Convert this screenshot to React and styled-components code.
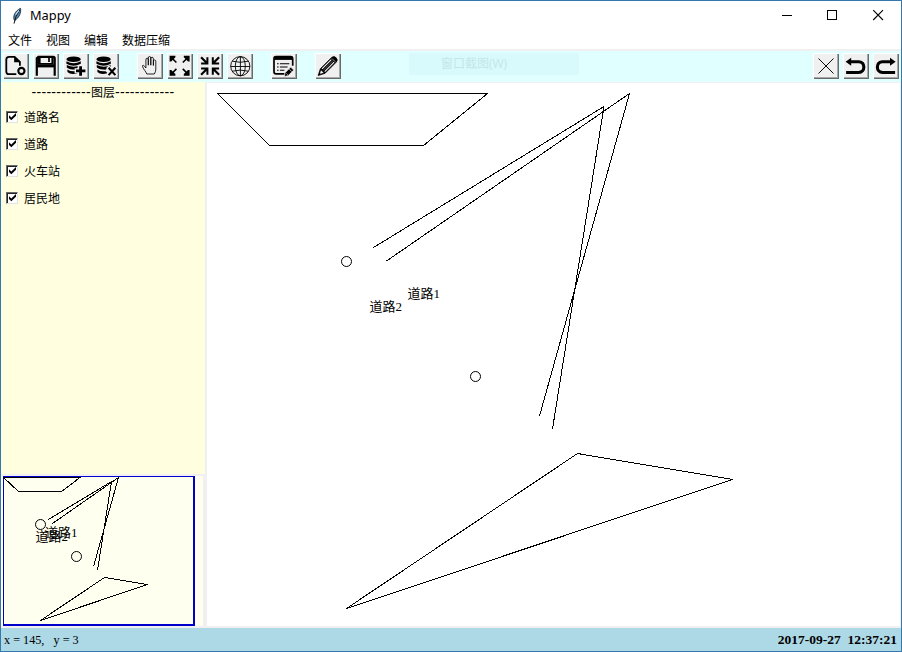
import React from 'react';
import styled, { createGlobalStyle } from 'styled-components';

const GlobalStyle = createGlobalStyle`
  * { box-sizing: border-box; }
  body { margin: 0; background: #fff; }
  svg { display: block; }
`;

const Window = styled.div`
  width: 902px;
  height: 652px;
  border: 1px solid #3578b0;
  background: #f0f0f0;
  display: flex;
  flex-direction: column;
  overflow: hidden;
  color: #000;
  font-family: "Noto Sans", "Noto Sans CJK SC", sans-serif;
`;

const TitleBar = styled.header`
  height: 29px;
  flex: none;
  background: #fff;
  display: flex;
  justify-content: space-between;
`;

const Title = styled.div`
  display: flex;
  align-items: center;
  gap: 6px;
  padding-left: 8px;
  font-size: 12.8px;
  line-height: 29px;
`;

const WindowControls = styled.div`
  display: flex;
`;

const WindowControl = styled.div`
  width: ${(p) => p.$width || 46}px;
`;

const MenuBar = styled.nav`
  height: 19px;
  flex: none;
  background: #fff;
  display: flex;
  gap: 14px;
  padding-left: 7px;
  font-family: "Noto Sans CJK SC", sans-serif;
  font-size: 12px;
  line-height: 20px;
`;

const MenuItem = styled.span`
  white-space: nowrap;
`;

const Toolbar = styled.div`
  height: 33px;
  flex: none;
  background: #e0ffff;
  border-top: 2px solid #f0f0f0;
  display: flex;
  justify-content: space-between;
  padding: 2px 2px 0;
  position: relative;
`;

const ToolGroups = styled.div`
  display: flex;
  gap: 18px;
`;

const ToolGroup = styled.div`
  display: flex;
  gap: 4px;
`;

const ToolButton = styled.button`
  width: 26px;
  height: 26px;
  padding: 0;
  border: none;
  background: #f0f0f0;
  box-shadow: inset 1px 1px #fff, inset -1px -1px #696969, inset -2px -2px #a8a8a8;
`;

const GhostItem = styled.div`
  position: absolute;
  left: 408px;
  top: 2px;
  width: 170px;
  height: 22px;
  padding-left: 32px;
  background: #d8fafc;
  color: #c4e6e8;
  font: 12px/22px "Open Sans", "Noto Sans CJK SC", sans-serif;
`;

const Body = styled.main`
  height: 546px;
  flex: none;
  display: flex;
`;

const Sidebar = styled.aside`
  width: 204px;
  display: flex;
  flex-direction: column;
  gap: 2px;
`;

const Layers = styled.section`
  height: 392px;
  background: #ffffe0;
  font-family: "Noto Sans CJK SC", sans-serif;
  font-size: 12px;
`;

const LayersHeading = styled.div`
  height: 21px;
  display: flex;
  justify-content: center;
  align-items: flex-start;
  line-height: 20px;
`;

const Dashes = styled.span`
  font-family: "Liberation Sans", sans-serif;
  font-size: 14px;
  letter-spacing: 0.29px;
`;

const LayerRow = styled.label`
  height: 27px;
  display: flex;
  align-items: center;
  gap: 6px;
  padding-left: 5px;
`;

const CheckMark = styled.span`
  width: 12px;
  height: 12px;
  background: #fff;
  border: 1px solid;
  border-color: #696969 #e3e3e3 #e3e3e3 #696969;
  box-shadow: inset 1px 1px #222;
`;

const Overview = styled.section`
  width: 202px;
  height: 150px;
  background: #fffff0;
  padding-left: 2px;
`;

const OverviewFrame = styled.div`
  width: 192px;
  height: 150px;
  border: 2px solid #0000cd;
  border-width: 1px 2px 2px 1px;
`;

const MapPane = styled.section`
  width: 693px;
  height: 543px;
  margin: 1px 0 0 2px;
  background: #fff;
`;

const StatusBar = styled.footer`
  height: 23px;
  flex: none;
  background: #add8e6;
  display: flex;
  justify-content: space-between;
  align-items: center;
  padding: 0 4px 0 3px;
  font-family: "Liberation Serif", serif;
  font-size: 12.2px;
  line-height: 24px;
  white-space: pre;
`;

const Clock = styled.time`
  font-size: 13.5px;
  font-weight: bold;
`;

const MapText = styled.text`
  font-family: "Liberation Serif", "Noto Sans CJK SC", serif;
  font-size: 13px;
  fill: #000;
`;

const Database = () => (
  <g>
    <ellipse cx="11" cy="6.5" rx="7.2" ry="2.8" />
    <path d="M3.8 8.5Q11 12.5 18.2 8.5V11Q11 15 3.8 11ZM4.2 12.3Q11 15.5 18 12.4V14Q14 15 13 17Q7 17 4.2 14.8ZM4.8 16.7Q8 19 13 18.5L15 20.5Q8 22.5 4.8 19.2Z" />
  </g>
);

const icons = {
  newFile: (
    <>
      <path d="M13.7 21.5H6.5Q3.7 21.5 3.7 18.7V6.8Q3.7 4.2 6.5 4.2H12L17.3 9.3V13" fill="none" stroke="#000" strokeWidth="1.8" />
      <path d="M11.5 3.5V9.5H17.5" />
      <circle cx="18.8" cy="18.3" r="3.1" fill="none" stroke="#000" strokeWidth="2.1" />
    </>
  ),
  save: (
    <>
      <path d="M4.2 23V5.5L5.8 4.1H20.6Q22.1 4.1 22.1 5.5V23" fill="none" stroke="#000" strokeWidth="2.2" />
      <path d="M6.8 3.5H8V10.2H18.8V3.5H21V12H5V5Z" />
      <path d="M16.4 4.6V9.4" stroke="#000" strokeWidth="1.7" />
      <path d="M4 13.2H22" stroke="#000" strokeWidth="3" />
    </>
  ),
  dbAdd: (
    <>
      <Database />
      <path d="M17.5 12.3V23.5M12 18H23.2" stroke="#f0f0f0" strokeWidth="5" />
      <path d="M18 13.5V23M13.4 18.2H22.8" stroke="#000" strokeWidth="2.8" />
    </>
  ),
  dbRemove: (
    <>
      <Database />
      <path d="M15 14L24 23M24 14L15 23" stroke="#f0f0f0" strokeWidth="4" />
      <path d="M16 15L22.8 22.4M22.8 15L16 22.4" stroke="#000" strokeWidth="2.1" />
    </>
  ),
  hand: (
    <path
      d="M10.2 21.3C9.3 18.6 7.1 17.1 6.1 14.2Q5.4 12.3 6.9 12.7Q8.2 13.6 9.3 15.3V7.2Q9.3 5.4 10.5 5.4Q11.7 5.4 11.7 7.2V12.5V5.3Q11.7 3.8 13 3.8Q14.2 3.8 14.2 5.3V12.5V5.8Q14.2 4.6 15.5 4.6Q16.8 4.6 16.8 6V12.8V8.4Q16.8 7.3 18 7.3Q19.2 7.3 19.2 8.8V16.4Q19.2 19.2 17.7 21.3Z"
      fill="none"
      stroke="#000"
      strokeWidth=".85"
    />
  ),
  expand: (
    <>
      <path d="M4 4L9.8 9.8M22 4L16.2 9.8M4 22L9.8 16.2M22 22L16.2 16.2" stroke="#000" strokeWidth="1.6" />
      <path d="M3 3H8.8V4.6L4.6 8.8H3ZM23 3H17.2V4.6L21.4 8.8H23ZM3 23V17.2H4.6L8.8 21.4V23ZM23 23V17.2H21.4L17.2 21.4V23Z" />
    </>
  ),
  collapse: (
    <>
      <path d="M4.5 4.5L10 10M22.5 4.5L17 10M4.5 22L10 16.5M22.5 22L17 16.5" stroke="#000" strokeWidth="2.2" />
      <path d="M11.8 4.5V11.8H4.5V9.8H8L9.8 8V4.5ZM15.2 4.5V11.8H22.5V9.8H19L17.2 8V4.5ZM11.8 22V14.8H4.5V16.8H8L9.8 18.6V22ZM15.2 22V14.8H22.5V16.8H19L17.2 18.6V22Z" />
    </>
  ),
  globe: (
    <g fill="none" stroke="#000" strokeWidth=".9">
      <circle cx="13.7" cy="13.5" r="9.6" />
      <ellipse cx="13.7" cy="13.5" rx="5" ry="9.6" />
      <path d="M13.8 3.8V23.2M4 13.8H23.3M5.6 8.5Q13.7 10.7 21.8 8.5M5.6 18.5Q13.7 16.3 21.8 18.5" />
    </g>
  ),
  form: (
    <>
      <path d="M14 21.2H5.5Q3.4 21.2 3.4 19V6Q3.4 4 5.5 4H20Q22.1 4 22.1 6.2V13" fill="none" stroke="#000" strokeWidth="1.7" />
      <path d="M3.5 4H22V7.2H3.5Z" />
      <path d="M6.4 11H8M9.3 11H18.8M6.4 14.3H8M9.3 14.3H17M6.4 17.5H8M9.3 17.5H13.8" stroke="#000" strokeWidth="1.1" />
      <path d="M14.5 20L20.1 14.4L23.1 17.4L17.5 23L13.7 23.8Z" stroke="#f0f0f0" strokeWidth=".7" />
      <path d="M18.5 16.2L21.3 19M15.8 20.7L17.2 22.1" stroke="#f0f0f0" strokeWidth=".7" />
    </>
  ),
  pencil: (
    <>
      <path d="M3.6 22.8L5.8 16L17 4.8Q19.2 2.8 21.5 5Q23.7 7.3 21.7 9.4L10.5 20.6Z" stroke="#000" strokeWidth=".8" strokeLinejoin="round" />
      <path d="M7.4 16.2L16.7 6.9M10.1 18.9L19.5 9.5" stroke="#f0f0f0" strokeWidth="1.1" />
      <path d="M8.7 17.6L18.2 8.1" stroke="#777" strokeWidth=".8" />
      <path d="M6.4 17.5L9 20L6 21L5.4 20.5Z" fill="#f0f0f0" />
      <path d="M17.4 5.8L20.8 9.2" stroke="#aaa" strokeWidth=".9" />
    </>
  ),
  cancel: <path d="M5.9 5.8L20.9 20.8M20.9 5.8L5.9 20.8" stroke="#000" strokeWidth=".95" />,
  undo: (
    <>
      <path d="M8 9H16C23 9 23 19.8 16 19.8H3.5" fill="none" stroke="#000" strokeWidth="3.1" />
      <path d="M3 9L8.6 5V13Z" />
    </>
  ),
  redo: (
    <>
      <path d="M18 9H10C3 9 3 19.8 10 19.8H22.5" fill="none" stroke="#000" strokeWidth="3.1" />
      <path d="M23 9L17.4 5V13Z" />
    </>
  ),
};

const toolGroups = [
  ['newFile', 'save', 'dbAdd', 'dbRemove'],
  ['hand', 'expand', 'collapse', 'globe'],
  ['form'],
  ['pencil'],
];

const Tool = ({ name }) => (
  <ToolButton>
    <svg width="26" height="26" viewBox="0.4 0.3 26 26">{icons[name]}</svg>
  </ToolButton>
);

const Feather = () => (
  <svg width="15" height="20" viewBox="0 0 15 20">
    <path d="M5.5 14.6C3.4 10.5 6 5 11.5 2.3C12.3 6 10.5 11.8 5.5 14.6Z" fill="#5489b5" stroke="#152b40" strokeWidth=".9" />
    <path d="M10.8 4Q6.4 9.5 5 17.6" fill="none" stroke="#111" strokeWidth="1" />
    <path d="M10 4.4L6.6 8.6" stroke="#c5e1f5" strokeWidth="1.1" />
  </svg>
);

const Checkbox = () => (
  <CheckMark>
    <svg width="10" height="10" viewBox="0 0 10 10">
      <path d="M2 3.2V6L4.3 8.2L9 3.7V1L4.3 5.4Z" />
    </svg>
  </CheckMark>
);

const layers = ['道路名', '道路', '火车站', '居民地'];

const MainMap = () => (
  <svg width="693" height="543" viewBox="207 83 693 543">
    <g fill="none" stroke="#000" strokeWidth="1" shapeRendering="crispEdges">
      <path d="M217.5 93.5H487.5L423.5 145.5H269.5Z" />
      <path d="M373.5 247.5L604 106.5L552.5 429" />
      <path d="M386.5 261L629.5 93.5L539.5 416" />
      <path d="M346.5 608.5L577.5 453.5L732.5 479.5Z" />
    </g>
    <g fill="none" stroke="#000">
      <circle cx="346.5" cy="261.5" r="5" />
      <circle cx="475.5" cy="376.5" r="5" />
    </g>
    <MapText x="407.5" y="298">道路1</MapText>
    <MapText x="369.5" y="311">道路2</MapText>
  </svg>
);

const OverviewMap = () => (
  <svg width="189" height="147" viewBox="4 477 189 147" overflow="visible">
    <g fill="none" stroke="#000" shapeRendering="crispEdges">
      <path d="M3.5 477.5H80L61.5 491.5H18.5Z" />
      <path d="M48.5 519.5L111.5 481.5L97.5 570.5" />
      <path d="M52.5 523.5L118.5 477.5L93.5 566.5" />
      <path d="M40.5 620.5L104.5 577.5L147.5 584.5Z" />
    </g>
    <g fill="none" stroke="#000">
      <circle cx="40.5" cy="524.5" r="5" />
      <circle cx="76.5" cy="556.5" r="5" />
    </g>
    <MapText x="45" y="537">道路1</MapText>
    <MapText x="35.5" y="541">道路2</MapText>
  </svg>
);

export default function App() {
  return (
    <>
      <GlobalStyle />
      <Window>
        <TitleBar>
          <Title>
            <Feather />
            Mappy
          </Title>
          <WindowControls>
            <WindowControl>
              <svg width="46" height="29"><path d="M18 14.5H28" stroke="#000" /></svg>
            </WindowControl>
            <WindowControl>
              <svg width="46" height="29"><rect x="17.5" y="9.5" width="9" height="9" fill="none" stroke="#000" /></svg>
            </WindowControl>
            <WindowControl $width={45}>
              <svg width="45" height="29"><path d="M17.2 9.2L27 19M27 9.2L17.2 19" stroke="#000" strokeWidth="1.1" /></svg>
            </WindowControl>
          </WindowControls>
        </TitleBar>
        <MenuBar>
          {['文件', '视图', '编辑', '数据压缩'].map((label) => (
            <MenuItem key={label}>{label}</MenuItem>
          ))}
        </MenuBar>
        <Toolbar>
          <ToolGroups>
            {toolGroups.map((group) => (
              <ToolGroup key={group[0]}>
                {group.map((name) => <Tool key={name} name={name} />)}
              </ToolGroup>
            ))}
          </ToolGroups>
          <GhostItem>窗口截图(W)</GhostItem>
          <ToolGroup>
            {['cancel', 'undo', 'redo'].map((name) => <Tool key={name} name={name} />)}
          </ToolGroup>
        </Toolbar>
        <Body>
          <Sidebar>
            <Layers>
              <LayersHeading>
                <Dashes>------------</Dashes>图层<Dashes>------------</Dashes>
              </LayersHeading>
              {layers.map((layer) => (
                <LayerRow key={layer}>
                  <Checkbox />
                  {layer}
                </LayerRow>
              ))}
            </Layers>
            <Overview>
              <OverviewFrame><OverviewMap /></OverviewFrame>
            </Overview>
          </Sidebar>
          <MapPane><MainMap /></MapPane>
        </Body>
        <StatusBar>
          <span>x = 145,   y = 3</span>
          <Clock>2017-09-27  12:37:21</Clock>
        </StatusBar>
      </Window>
    </>
  );
}
